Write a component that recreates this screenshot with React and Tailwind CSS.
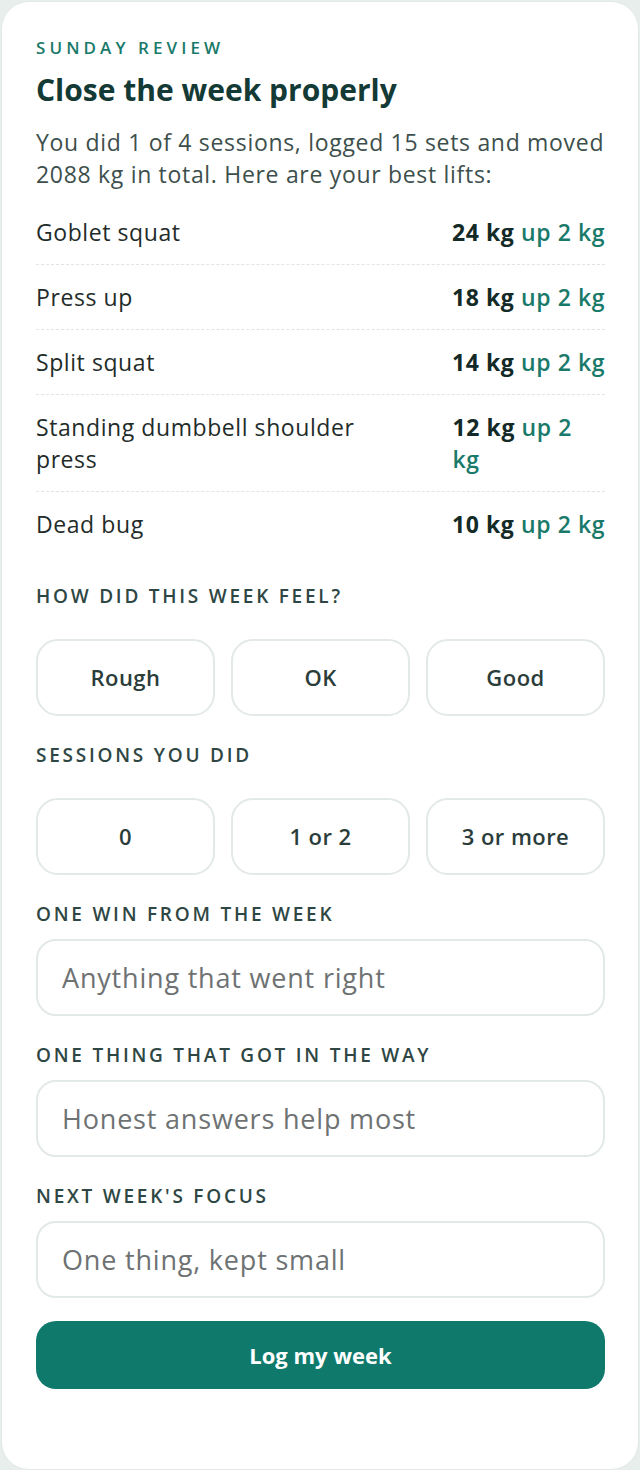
import React, { useState } from "react";

const lifts = [
  { name: "Goblet squat", weight: "24 kg", delta: "up 2 kg" },
  { name: "Press up", weight: "18 kg", delta: "up 2 kg" },
  { name: "Split squat", weight: "14 kg", delta: "up 2 kg" },
  { name: "Standing dumbbell shoulder press", weight: "12 kg", delta: "up 2 kg" },
  { name: "Dead bug", weight: "10 kg", delta: "up 2 kg" },
];

function Label({ children, className = "" }) {
  return (
    <p className={`text-[19px] font-semibold tracking-[0.145em] uppercase text-[#2f4744] leading-6 ${className}`}>
      {children}
    </p>
  );
}

function Choices({ options, value, onChange }) {
  return (
    <div className="grid grid-cols-3 gap-4 mt-[31px]">
      {options.map((opt) => (
        <button
          key={opt}
          onClick={() => onChange(opt)}
          className={`h-[77px] rounded-[22px] border-2 text-[22px] tracking-[0.02em] font-semibold ${
            value === opt ? "border-[#0f7a6b] bg-[#eef7f5] text-[#0f5c51]" : "border-[#e2e9e7] bg-white text-[#2b3d3a]"
          }`}
        >
          {opt}
        </button>
      ))}
    </div>
  );
}

function TextField({ placeholder }) {
  return (
    <input
      placeholder={placeholder}
      className="mt-[13px] w-full h-[77px] rounded-[20px] border-2 border-[#e2e9e7] px-6 text-[27px] tracking-[0.03em] text-[#2b3d3a] placeholder:text-[#6e7273] outline-none"
    />
  );
}

export default function App() {
  const [feel, setFeel] = useState(null);
  const [sessions, setSessions] = useState(null);

  return (
    <div className="min-h-screen bg-[#e8eeec] p-[1px]" style={{ fontFamily: "'Open Sans', 'Noto Sans', sans-serif" }}>
      <div className="bg-white rounded-[28px] border border-[#e2e9e7] pl-[34px] pr-[33px] pt-[36px] pb-[80px]">
        <p className="text-[17px] font-semibold tracking-[0.24em] text-[#1a7a6a] leading-5">SUNDAY REVIEW</p>
        <h1 className="mt-[16px] text-[30px] font-bold text-[#133a35] leading-8">Close the week properly</h1>
        <p className="mt-[20px] text-[23px] tracking-[0.03em] leading-[32px] text-[#3d4f4c]">
          You did 1 of 4 sessions, logged 15 sets and moved 2088 kg in total. Here are your best lifts:
        </p>

        {/* best lifts list */}
        <div className="mt-[10px]">
          {lifts.map((l, i) => (
            <div
              key={l.name}
              className={`flex justify-between gap-8 py-[16px] text-[23px] tracking-[0.025em] leading-[32px] ${
                i < lifts.length - 1 ? "border-b border-dashed border-[#dfe5e3]" : ""
              }`}
            >
              <span className="text-[#1f2c2a]">{l.name}</span>
              <span className="font-bold text-[#132a27]">
                {l.weight}
                {l.delta.split(" ").map((w, j) => (
                  <React.Fragment key={j}>
                    {" "}
                    <span className="font-semibold text-[#1a7a6a]">{w}</span>
                  </React.Fragment>
                ))}
              </span>
            </div>
          ))}
        </div>

        <Label className="mt-[28px]">How did this week feel?</Label>
        <Choices options={["Rough", "OK", "Good"]} value={feel} onChange={setFeel} />

        <Label className="mt-[27px]">Sessions you did</Label>
        <Choices options={["0", "1 or 2", "3 or more"]} value={sessions} onChange={setSessions} />

        <Label className="mt-[27px]">One win from the week</Label>
        <TextField placeholder="Anything that went right" />

        <Label className="mt-[27px]">One thing that got in the way</Label>
        <TextField placeholder="Honest answers help most" />

        <Label className="mt-[27px]">Next week's focus</Label>
        <TextField placeholder="One thing, kept small" />

        <button className="mt-[23px] w-full h-[68px] rounded-[20px] bg-[#0f7a6b] text-white text-[22px] font-bold">
          Log my week
        </button>
      </div>
    </div>
  );
}
